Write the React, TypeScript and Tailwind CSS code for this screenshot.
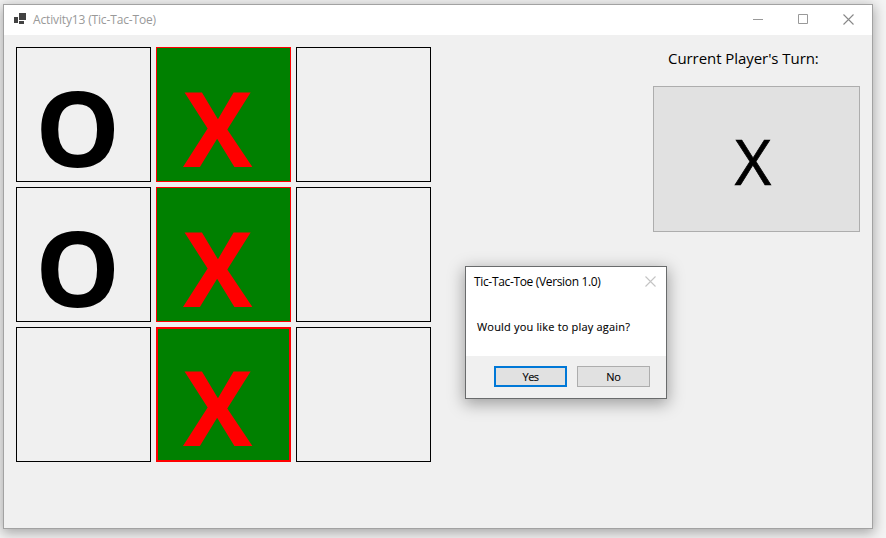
import React from "react";

type Mark = "O" | "X" | "";

const board: { mark: Mark; won: boolean; focused?: boolean }[] = [
  { mark: "O", won: false },
  { mark: "X", won: true },
  { mark: "", won: false },
  { mark: "O", won: false },
  { mark: "X", won: true },
  { mark: "", won: false },
  { mark: "", won: false },
  { mark: "X", won: true, focused: true },
  { mark: "", won: false },
];

function Cell({ mark, won, focused }: { mark: Mark; won: boolean; focused?: boolean }) {
  const skin = won ? "bg-[#008000] text-[#ff0000]" : "text-black";
  const line = won
    ? focused
      ? "border-2 border-[#ff0000] pt-[5px]"
      : "border border-[#ff0000] pt-[7px]"
    : "border border-black pt-[7px]";
  const shift = mark === "O" ? "pl-[18px]" : focused ? "pl-[25px]" : "pl-[26px]";
  return (
    <button
      className={`flex h-[135px] w-[135px] items-start leading-[144px] font-bold text-[104px] ${skin} ${line} ${shift}`}
    >
      <span className={mark === "O" ? "origin-left scale-x-[1.03]" : ""}>{mark}</span>
    </button>
  );
}

function CloseIcon({ color }: { color: string }) {
  return (
    <svg width="11" height="11" viewBox="0 0 11 11" stroke={color} fill="none">
      <path d="M.5 .5 10.5 10.5M10.5 .5 .5 10.5" strokeWidth="1.1" />
    </svg>
  );
}

function Dialog() {
  return (
    <div className="absolute top-[266px] left-[465px] flex h-[133px] w-[202px] flex-col border border-[#696b6c] bg-white text-black shadow-[0_4px_15px_1px_rgba(0,0,0,0.34)]">
      <div className="flex h-[29px] shrink-0 items-center justify-between pr-[10px] pl-[8px]">
        <span className="pt-[1px] text-[12px] leading-[16px] tracking-[-0.34px] whitespace-nowrap">Tic-Tac-Toe (Version 1.0)</span>
        <CloseIcon color="#c4c4c4" />
      </div>
      <div className="flex grow items-center pt-[2px] pl-[11px]">
        <span className="text-[11px] leading-[16px] tracking-[0.18px] whitespace-nowrap [-webkit-text-stroke:0.1px_black]">Would you like to play again?</span>
      </div>
      <div className="flex h-[42px] shrink-0 items-start justify-end gap-[10px] bg-[#f0f0f0] pt-[10px] pr-[16px] text-[11px]">
        <button className="h-[21px] w-[73px] border-2 border-[#0078d7] bg-[#e1e1e1] leading-[17px] tracking-[-0.6px] [-webkit-text-stroke:0.1px_black]">Yes</button>
        <button className="h-[21px] w-[73px] border border-[#adadad] bg-[#e1e1e1] leading-[19px] tracking-[-0.2px] [-webkit-text-stroke:0.1px_black]">No</button>
      </div>
    </div>
  );
}

export default function App() {
  return (
    <div className="relative h-[538px] w-[886px] overflow-hidden bg-[#f4f4f4] pt-[4px] pl-[3px] font-['Open_Sans','Noto_Sans',sans-serif]">
      <div className="flex h-[525px] w-[870px] flex-col border border-[#a2a2a2] bg-[#f0f0f0] shadow-[0_3px_12px_1px_rgba(0,0,0,0.32)]">
        <header className="flex h-[30px] shrink-0 items-center bg-white pr-[18px] pl-[10px] text-[#999999]">
          <svg width="12" height="12" viewBox="0 0 12 12" fill="#424242" className="-mt-[2px] shrink-0">
            <path d="M5 0h7v7H5zM0 4h4v6H0zM5 8h5v3H5z" />
          </svg>
          <span className="ml-[7px] grow text-[12px] leading-[16px] tracking-[-0.15px] whitespace-nowrap">Activity13 (Tic-Tac-Toe)</span>
          <div className="-mt-[1px] flex h-[11px] items-start gap-[35px]">
            <svg width="10" height="10" viewBox="0 0 10 10" fill="#999">
              <path d="M0 5h10v1H0z" />
            </svg>
            <svg width="10" height="10" viewBox="0 0 10 10" fill="none" stroke="#999">
              <path d="M.5.5h9v9h-9z" />
            </svg>
            <CloseIcon color="#888" />
          </div>
        </header>
        <main className="flex justify-between pt-[12px] pr-[12px] pl-[12px]">
          <div className="grid grid-cols-[135px_135px_135px] gap-[5px]">
            {board.map((cell, i) => (
              <Cell key={i} {...cell} />
            ))}
          </div>
          <aside className="flex w-[207px] flex-col text-black">
            <div className="h-[39px] pl-[15px] text-[15px] leading-[22px] tracking-[-0.06px] whitespace-nowrap">Current Player's Turn:</div>
            <button className="flex h-[146px] w-[207px] items-start justify-center border border-[#adadad] bg-[#e1e1e1] pt-[30px] pr-[7px] text-[63px] leading-[87px] [-webkit-text-stroke:0.7px_black]">
              X
            </button>
          </aside>
        </main>
      </div>
      <Dialog />
    </div>
  );
}
